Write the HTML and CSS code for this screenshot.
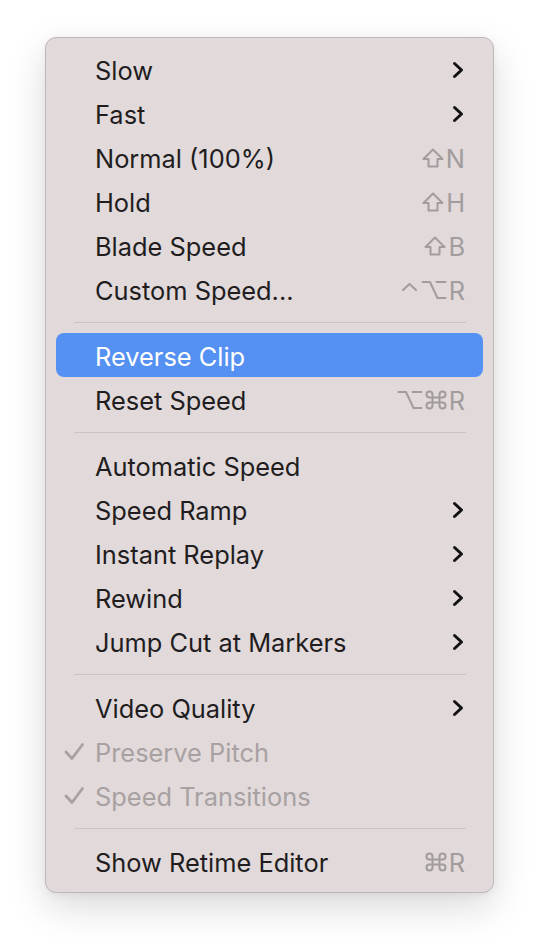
FILE: index.html
```html
<!DOCTYPE html>
<html lang="en">
<head>
<meta charset="utf-8">
<title>Retime menu</title>
<link rel="stylesheet" href="styles.css">
</head>
<body>
<div class="menu">
  <div class="item"><span class="check"></span><span class="label">Slow</span><svg class="chev" width="12" height="18" viewBox="0 0 12 18"><polyline points="2.5,2.5 9.5,9 2.5,15.5"/></svg></div>
  <div class="item"><span class="check"></span><span class="label">Fast</span><svg class="chev" width="12" height="18" viewBox="0 0 12 18"><polyline points="2.5,2.5 9.5,9 2.5,15.5"/></svg></div>
  <div class="item"><span class="check"></span><span class="label">Normal (100%)</span><span class="key"><svg class="mod" width="22" height="20" viewBox="0 0 22 20"><path d="M11 1.5 L20.5 11 H15.5 V18.5 H6.5 V11 H1.5 Z"/></svg>N</span></div>
  <div class="item"><span class="check"></span><span class="label">Hold</span><span class="key"><svg class="mod" width="22" height="20" viewBox="0 0 22 20"><path d="M11 1.5 L20.5 11 H15.5 V18.5 H6.5 V11 H1.5 Z"/></svg>H</span></div>
  <div class="item"><span class="check"></span><span class="label">Blade Speed</span><span class="key"><svg class="mod" width="22" height="20" viewBox="0 0 22 20"><path d="M11 1.5 L20.5 11 H15.5 V18.5 H6.5 V11 H1.5 Z"/></svg>B</span></div>
  <div class="item"><span class="check"></span><span class="label">Custom Speed...</span><span class="key"><svg class="mod" width="18" height="20" viewBox="0 0 18 20"><path d="M2 10 L8.5 4 L15 10"/></svg><svg class="mod" width="26" height="20" viewBox="0 0 26 20"><path d="M1.5 2 H9 L16.5 18 H24.5 M15.5 2 H24.5"/></svg>R</span></div>
  <div class="sep"></div>
  <div class="item active"><span class="check"></span><span class="label">Reverse Clip</span></div>
  <div class="item"><span class="check"></span><span class="label">Reset Speed</span><span class="key"><svg class="mod" width="26" height="20" viewBox="0 0 26 20"><path d="M1.5 2 H9 L16.5 18 H24.5 M15.5 2 H24.5"/></svg><svg class="mod" width="22" height="20" viewBox="0 0 22 20"><path d="M7.5 7.5 V4.5 A3 3 0 1 0 4.5 7.5 H17.5 A3 3 0 1 0 14.5 4.5 V15.5 A3 3 0 1 0 17.5 12.5 H4.5 A3 3 0 1 0 7.5 15.5 Z"/></svg>R</span></div>
  <div class="sep"></div>
  <div class="item"><span class="check"></span><span class="label">Automatic Speed</span></div>
  <div class="item"><span class="check"></span><span class="label">Speed Ramp</span><svg class="chev" width="12" height="18" viewBox="0 0 12 18"><polyline points="2.5,2.5 9.5,9 2.5,15.5"/></svg></div>
  <div class="item"><span class="check"></span><span class="label">Instant Replay</span><svg class="chev" width="12" height="18" viewBox="0 0 12 18"><polyline points="2.5,2.5 9.5,9 2.5,15.5"/></svg></div>
  <div class="item"><span class="check"></span><span class="label">Rewind</span><svg class="chev" width="12" height="18" viewBox="0 0 12 18"><polyline points="2.5,2.5 9.5,9 2.5,15.5"/></svg></div>
  <div class="item"><span class="check"></span><span class="label">Jump Cut at Markers</span><svg class="chev" width="12" height="18" viewBox="0 0 12 18"><polyline points="2.5,2.5 9.5,9 2.5,15.5"/></svg></div>
  <div class="sep"></div>
  <div class="item"><span class="check"></span><span class="label">Video Quality</span><svg class="chev" width="12" height="18" viewBox="0 0 12 18"><polyline points="2.5,2.5 9.5,9 2.5,15.5"/></svg></div>
  <div class="item disabled"><span class="check"><svg width="20" height="20" viewBox="0 0 20 20"><polyline points="2,10 8,16.5 18.5,2.5"/></svg></span><span class="label">Preserve Pitch</span></div>
  <div class="item disabled"><span class="check"><svg width="20" height="20" viewBox="0 0 20 20"><polyline points="2,10 8,16.5 18.5,2.5"/></svg></span><span class="label">Speed Transitions</span></div>
  <div class="sep"></div>
  <div class="item"><span class="check"></span><span class="label">Show Retime Editor</span><span class="key"><svg class="mod" width="22" height="20" viewBox="0 0 22 20"><path d="M7.5 7.5 V4.5 A3 3 0 1 0 4.5 7.5 H17.5 A3 3 0 1 0 14.5 4.5 V15.5 A3 3 0 1 0 17.5 12.5 H4.5 A3 3 0 1 0 7.5 15.5 Z"/></svg>R</span></div>
</div>
</body>
</html>
```
FILE: styles.css
```css
html, body {
  margin: 0;
  background: #ffffff;
}
body {
  padding: 37px 0 55px 45px;
  font-family: Inter, "Noto Sans", "DejaVu Sans", sans-serif;
}
.menu {
  box-sizing: border-box;
  width: 449px;
  height: 856px;
  background: #e1d9da;
  border: 1px solid #bdb7b8;
  border-radius: 11px;
  padding: 9px 10px;
  box-shadow: 0 14px 38px rgba(0, 0, 0, 0.15), 0 2px 8px rgba(0, 0, 0, 0.05);
}
.item {
  display: grid;
  grid-template-columns: 39px 1fr auto;
  align-items: center;
  height: 44px;
  padding-right: 18px;
  border-radius: 8px;
  font-size: 25.4px;
  color: #211d1e;
}
.item.active {
  background: #5591f2;
  color: #ffffff;
}
.item.disabled {
  color: #a8a1a2;
}
.check {
  display: flex;
  align-items: center;
  padding-left: 8px;
  padding-top: 2px;
}
.check svg polyline {
  fill: none;
  stroke: #a8a1a2;
  stroke-width: 2.8;
  stroke-linecap: round;
  stroke-linejoin: round;
}
.label {
  white-space: nowrap;
  padding-top: 3px;
}
.chev {
  display: block;
  margin-right: 1px;
  margin-top: 1px;
}
.chev polyline {
  fill: none;
  stroke: #111;
  stroke-width: 3;
  stroke-linecap: round;
  stroke-linejoin: round;
}
.key {
  display: flex;
  align-items: center;
  gap: 2px;
  color: #a29c9d;
  white-space: nowrap;
  padding-top: 3px;
}
.mod {
  display: block;
  margin-top: -2px;
}
.mod path {
  fill: none;
  stroke: #a29c9d;
  stroke-width: 2;
  stroke-linejoin: round;
  stroke-linecap: round;
}
.sep {
  height: 22px;
  display: flex;
  align-items: center;
  padding: 0 17px 0 18px;
}
.sep::before {
  content: "";
  flex: 1;
  height: 1px;
  background: #cbc3c4;
}
```
